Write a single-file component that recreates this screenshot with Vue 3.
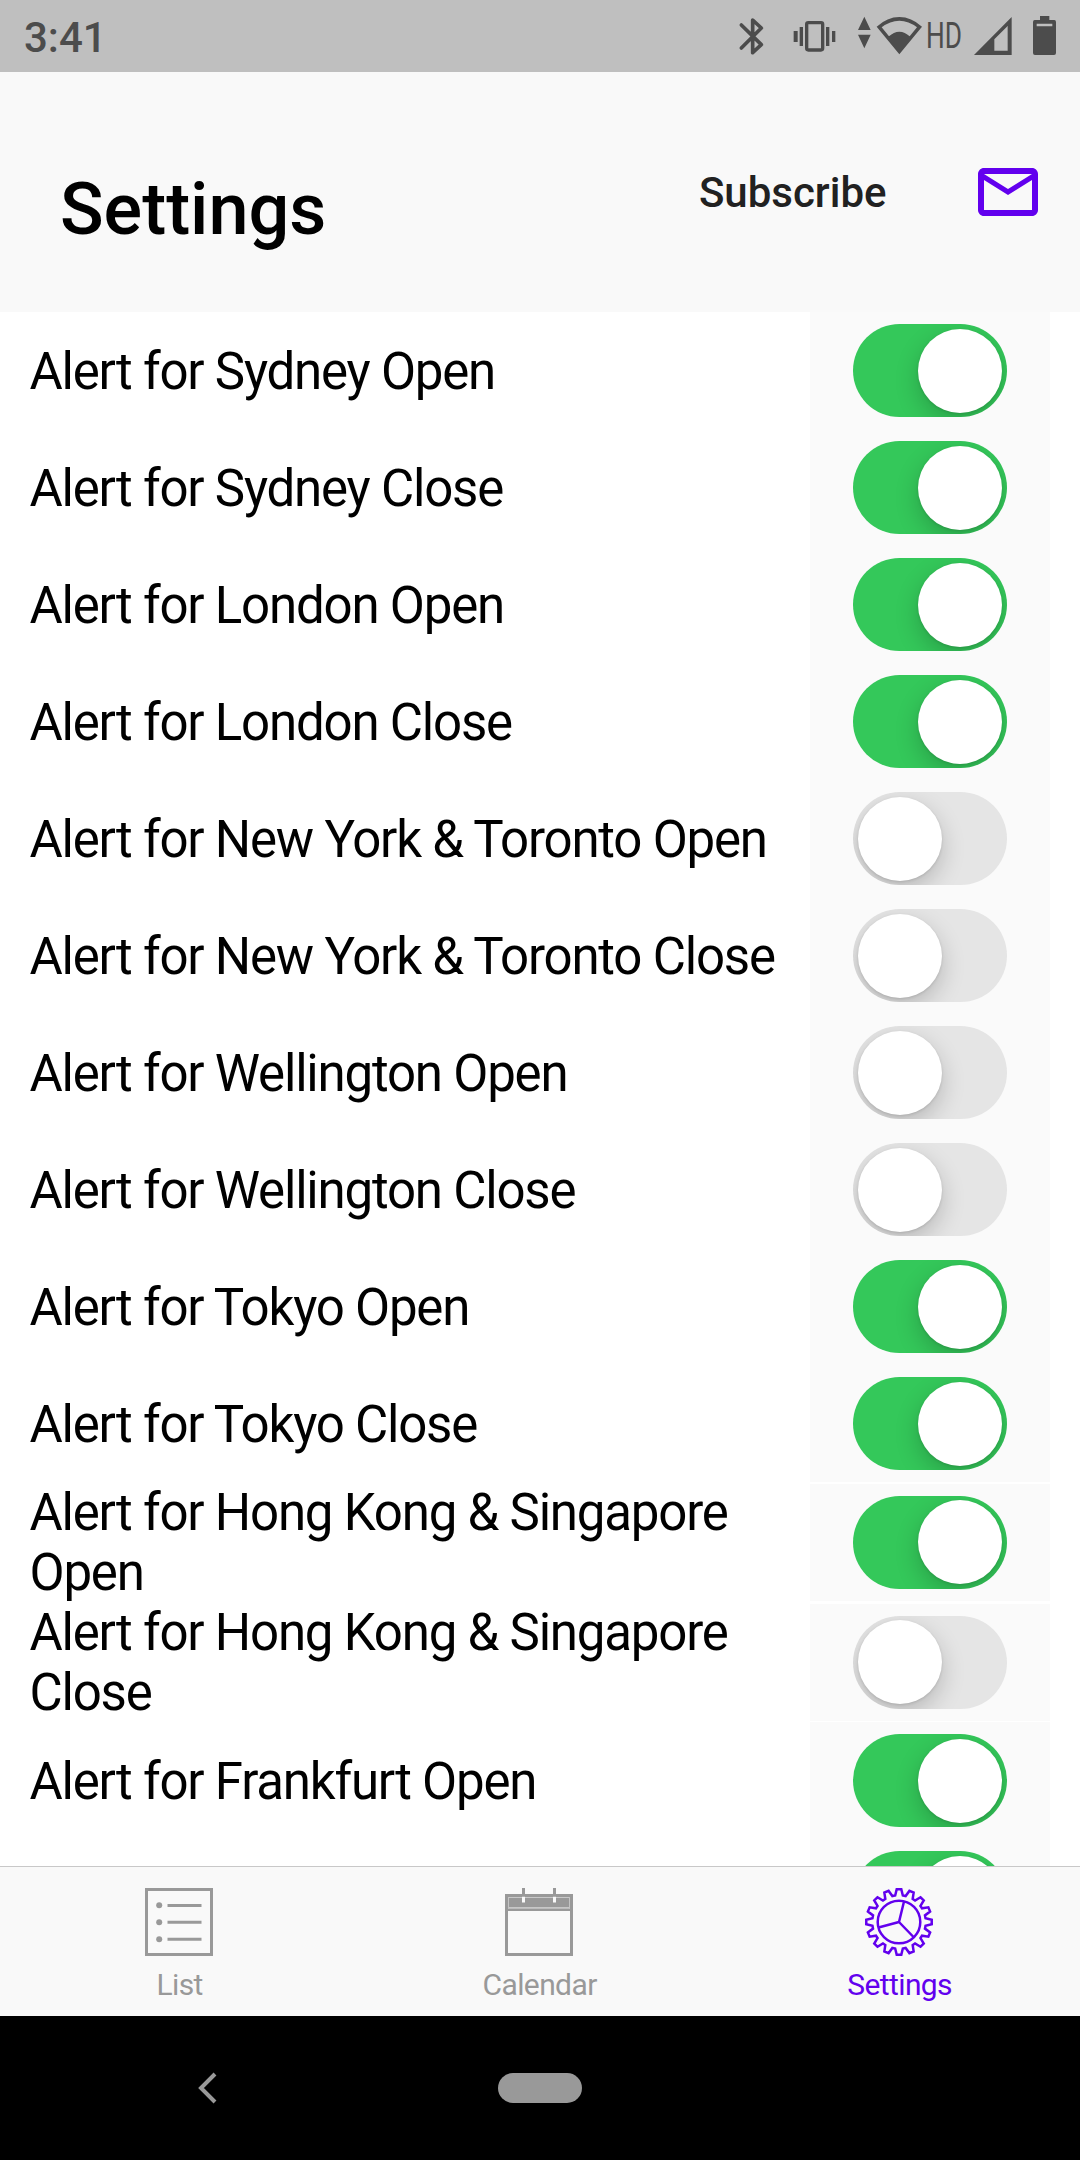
<script setup>
import { ref } from 'vue'

const alerts = ref([
  { name: 'Sydney Open', on: true },
  { name: 'Sydney Close', on: true },
  { name: 'London Open', on: true },
  { name: 'London Close', on: true },
  { name: 'New York & Toronto Open', on: false },
  { name: 'New York & Toronto Close', on: false },
  { name: 'Wellington Open', on: false },
  { name: 'Wellington Close', on: false },
  { name: 'Tokyo Open', on: true },
  { name: 'Tokyo Close', on: true },
  { name: 'Hong Kong & Singapore Open', on: true },
  { name: 'Hong Kong & Singapore Close', on: false },
  { name: 'Frankfurt Open', on: true },
  { name: '', on: true },
])

// Outline of a 16-tooth gear centred on 34,34
const gearPath = (() => {
  const pts = []
  const add = (deg, r) => {
    const a = (deg * Math.PI) / 180
    pts.push(`${(34 + r * Math.sin(a)).toFixed(2)} ${(34 - r * Math.cos(a)).toFixed(2)}`)
  }
  for (let i = 0; i < 16; i++) {
    const c = i * 22.5
    add(c - 8.2, 26.8)
    add(c - 4, 32.8)
    add(c + 4, 32.8)
    add(c + 8.2, 26.8)
  }
  return `M${pts.join('L')}Z`
})()
</script>

<template>
  <div class="screen">
    <div class="status">
      <span class="clock">3:41</span>
      <div class="status-icons">
        <svg width="45" height="72" viewBox="90 0 135 216">
          <path d="M124 75L184 134L158 158V60L184 84L124 144" fill="none" stroke="#4c4c4c" stroke-width="11" stroke-linejoin="round" stroke-linecap="round" />
        </svg>
        <svg width="73" height="72" viewBox="225 0 219 216">
          <rect x="320" y="68" width="48" height="82" rx="5" fill="none" stroke="#4c4c4c" stroke-width="10" />
          <path d="M281 93h12v33h-12zM299 81h10v57h-10zM378 81h10v57h-10zM396 93h10v33h-10z" fill="#4c4c4c" />
        </svg>
        <svg width="77" height="72" viewBox="444 0 231 216">
          <path d="M493 50L512 90H474zM474 104H512L493 145z" fill="#4c4c4c" />
          <path fill-rule="evenodd" d="M530 80Q562 51 598 51T666 80L598 163zM545 82L567 109Q581 95 598 95T629 109L651 82Q626 62 598 62T545 82z" fill="#4c4c4c" />
        </svg>
        <span class="hd"><span>HD</span></span>
        <svg width="57" height="72" viewBox="795 0 171 216">
          <path fill-rule="evenodd" d="M822 165L935 51V165zM883 152H923V78L883 118z" fill="#4c4c4c" />
        </svg>
        <svg width="58" height="72" viewBox="966 0 174 216">
          <path fill-rule="evenodd" d="M1020 48H1048V60H1063Q1068 60 1068 66V159Q1068 165 1062 165H1005Q999 165 999 159V66Q999 60 1004 60H1020zM1010 71V79H1057V71z" fill="#4c4c4c" />
        </svg>
      </div>
    </div>

    <header class="header">
      <h1>Settings</h1>
      <div class="actions">
        <span class="subscribe">Subscribe</span>
        <svg width="72" height="72" viewBox="0 0 24 24" fill="#6200ee">
          <path d="M20 4H4c-1.1 0-2 .9-2 2v12c0 1.1.9 2 2 2h16c1.1 0 2-.9 2-2V6c0-1.1-.9-2-2-2zm0 14H4V8l8 5 8-5v10zm-8-7L4 6h16l-8 5z" />
        </svg>
      </div>
    </header>

    <main class="list">
      <div v-for="(a, i) in alerts" :key="i" class="row">
        <div v-if="a.name" class="label">Alert for {{ a.name }}</div>
        <div class="cell">
          <div class="toggle" :class="{ on: a.on }" @click="a.on = !a.on">
            <div class="thumb"></div>
          </div>
        </div>
      </div>
    </main>

    <nav class="tabs">
      <div class="tab">
        <svg width="68" height="68" viewBox="0 0 68 68" fill="none" stroke="#999" stroke-width="3">
          <rect x="1.5" y="1.5" width="65" height="65" />
          <path d="M22.5 17.5h34M22.5 34.3h34M22.5 51.3h34" />
          <g fill="#999" stroke="none">
            <circle cx="14.2" cy="17.2" r="3" />
            <circle cx="14.2" cy="34.2" r="3" />
            <circle cx="14.2" cy="51.2" r="3" />
          </g>
        </svg>
        <span>List</span>
      </div>
      <div class="tab">
        <svg width="68" height="68" viewBox="0 0 68 68" fill="none">
          <rect x="1.5" y="7.5" width="65" height="59" stroke="#999" stroke-width="3" />
          <rect x="3.5" y="9.5" width="61" height="10" fill="#999" />
          <path d="M3.5 9V20H64.5V9" stroke="#c4c4c4" stroke-width="1" />
          <path d="M2 21.7H66" stroke="#999" stroke-width="2.4" />
          <path d="M18.5 8.5v6M49.5 8.5v6" stroke="#f9f9f9" stroke-width="3" />
          <path d="M18.5 0v8.5M49.5 0v8.5" stroke="#999" stroke-width="3" />
        </svg>
        <span>Calendar</span>
      </div>
      <div class="tab active">
        <svg width="68" height="68" viewBox="0 0 68 68" fill="none" stroke="#6200ee" stroke-width="2.5">
          <path :d="gearPath" />
          <circle cx="34" cy="34" r="21.3" />
          <path d="M34 34L39 13.5M34 34L13.5 39.5M34 34L48.5 49" />
        </svg>
        <span>Settings</span>
      </div>
    </nav>

    <div class="sysnav">
      <svg class="back" width="20" height="32" viewBox="0 0 20 32" fill="none" stroke="#999" stroke-width="4">
        <path d="M17 2L3 16L17 30" />
      </svg>
      <div class="home"></div>
    </div>
  </div>
</template>

<style>
body {
  margin: 0;
}
</style>

<style scoped>
.screen {
  width: 1080px;
  height: 2160px;
  display: flex;
  flex-direction: column;
  overflow: hidden;
  background: #fff;
  font-family: Roboto, sans-serif;
}
.status {
  flex: none;
  height: 72px;
  display: flex;
  justify-content: space-between;
  background: #bfbfbf;
  color: #4c4c4c;
}
.clock {
  padding-left: 24px;
  font-size: 42px;
  font-weight: 500;
  line-height: 76px;
}
.status-icons {
  display: flex;
}
.hd {
  width: 40px;
  font-size: 36px;
  line-height: 72px;
  font-weight: 400;
}
.hd span {
  display: inline-block;
  margin-left: 1px;
  transform: scaleX(0.73);
  transform-origin: 0 0;
}
.header {
  flex: none;
  height: 240px;
  display: flex;
  justify-content: space-between;
  background: #f9f9f9;
}
h1 {
  margin: 0;
  padding: 96px 0 0 60px;
  font-size: 72px;
  font-weight: 500;
  line-height: 84px;
  color: #000;
}
.actions {
  display: flex;
  height: 72px;
  margin-top: 84px;
  padding-right: 36px;
  gap: 85.5px;
}
.subscribe {
  font-size: 42px;
  font-weight: 500;
  line-height: 74px;
  color: #212121;
}
.list {
  flex: 1;
  min-height: 0;
  overflow: hidden;
}
.row {
  display: flex;
  align-items: center;
  min-height: 117px;
  padding: 0 30px;
}
.label {
  width: 760px;
  padding-top: 1px;
  margin: 0 0 -1px -0.5px;
  font-size: 51px;
  line-height: 60px;
  letter-spacing: -1.2px;
  color: #000;
}
.cell {
  flex: none;
  width: 240px;
  height: 117px;
  margin-left: auto;
  display: flex;
  align-items: center;
  justify-content: center;
  background: #fafafa;
}
.toggle {
  box-sizing: border-box;
  width: 153.4px;
  height: 93px;
  padding: 4.5px;
  border-radius: 47px;
  overflow: hidden;
  display: flex;
  background: #e5e5e5;
}
.toggle.on {
  justify-content: flex-end;
  background: #34c85a;
}
.thumb {
  width: 84px;
  height: 84px;
  border-radius: 50%;
  background: #fff;
  box-shadow: 0 9px 24px rgba(0, 0, 0, 0.2), 0 1px 3px rgba(0, 0, 0, 0.12);
}
.tabs {
  flex: none;
  box-sizing: border-box;
  height: 150px;
  display: flex;
  border-top: 1px solid #c8c8c8;
  background: #f9f9f9;
}
.tab {
  flex: none;
  width: 360px;
  display: flex;
  flex-direction: column;
  align-items: center;
  padding-top: 21px;
  font-size: 30px;
  line-height: 36px;
  letter-spacing: -0.6px;
  color: #999;
}
.tab:first-child {
  margin-left: -0.7px;
}
.tab span {
  margin: 11px 0 0 0.6px;
}
.tab.active {
  color: #6200ee;
}
.sysnav {
  flex: none;
  height: 144px;
  display: flex;
  align-items: center;
  background: #000;
}
.back {
  margin-left: 198px;
}
.home {
  width: 84px;
  height: 30px;
  margin-left: 280px;
  border-radius: 15px;
  background: #999;
}
</style>
